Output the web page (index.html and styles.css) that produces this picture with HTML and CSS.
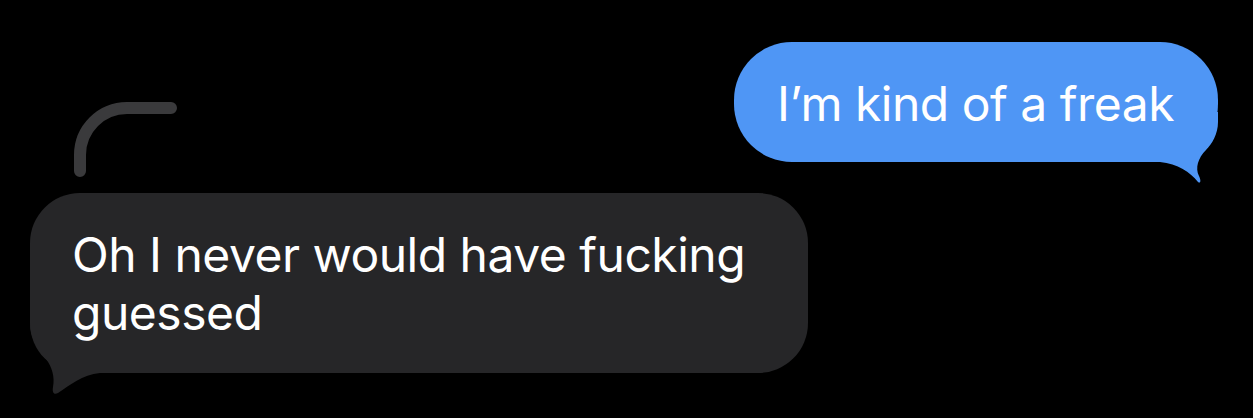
FILE: index.html
```html
<!DOCTYPE html>
<html lang="en">
<head>
<meta charset="utf-8">
<title>Messages</title>
<link rel="stylesheet" href="styles.css">
</head>
<body>
<main class="thread">
  <div class="row row-out">
    <div class="bubble bubble-out">
      <span class="text">I’m kind of a freak</span>
      <svg class="tail tail-out" width="70" height="72" viewBox="0 0 70 72" aria-hidden="true">
        <path d="M0 50 H12 C30 52 42 60 50 70 C53 72 53 68 51 64 C47 56 50 46 58 38 C64 32 70 22 70 10 V0 H0 Z"/>
      </svg>
    </div>
  </div>
  <div class="row row-in">
    <svg class="reply-line" width="110" height="84" viewBox="0 0 110 84" aria-hidden="true">
      <path d="M8 71 V55 A47 47 0 0 1 55 8 H99"/>
    </svg>
    <div class="bubble bubble-in">
      <span class="text">Oh I never would have fucking guessed</span>
      <svg class="tail tail-in" width="70" height="72" viewBox="0 0 70 72" aria-hidden="true">
        <path d="M0 0 C0 15 8 28 16 36 C22 44 25 54 23 64 C22 70 24 72 28 70 C40 62 52 52 70 50 H70 V0 Z"/>
      </svg>
    </div>
  </div>
</main>
</body>
</html>
```

FILE: styles.css
```css
html, body {
  margin: 0;
  padding: 0;
  background: #000;
}

body {
  width: 1253px;
  height: 418px;
  overflow: hidden;
  font-family: "Inter", "Noto Sans", sans-serif;
  color: #fff;
}

.thread {
  display: flex;
  flex-direction: column;
  padding: 42px 35px 0 30px;
}

.row {
  display: flex;
}

.row-out {
  justify-content: flex-end;
  margin-bottom: -62px;
}

.row-in {
  flex-direction: column;
  align-items: flex-start;
}

.bubble {
  position: relative;
  box-sizing: border-box;
  font-size: 48px;
  line-height: 58px;
  letter-spacing: -0.5px;
}

.bubble-out {
  background: #4f96f5;
  border-radius: 58px;
  height: 120px;
  padding: 33px 44px 29px 43px;
  white-space: nowrap;
}

.bubble-in {
  background: #262628;
  border-radius: 50px;
  width: 778px;
  padding: 33px 30px 31px 42px;
}

.text {
  position: relative;
  z-index: 1;
}

.tail {
  position: absolute;
  bottom: -22px;
}

.tail-out {
  right: 0;
  fill: #4f96f5;
}

.tail-in {
  left: 0;
  fill: #262628;
}

.reply-line {
  margin-left: 42px;
  margin-bottom: 9px;
  fill: none;
  stroke: #3a3a3c;
  stroke-width: 12;
  stroke-linecap: round;
}
```
